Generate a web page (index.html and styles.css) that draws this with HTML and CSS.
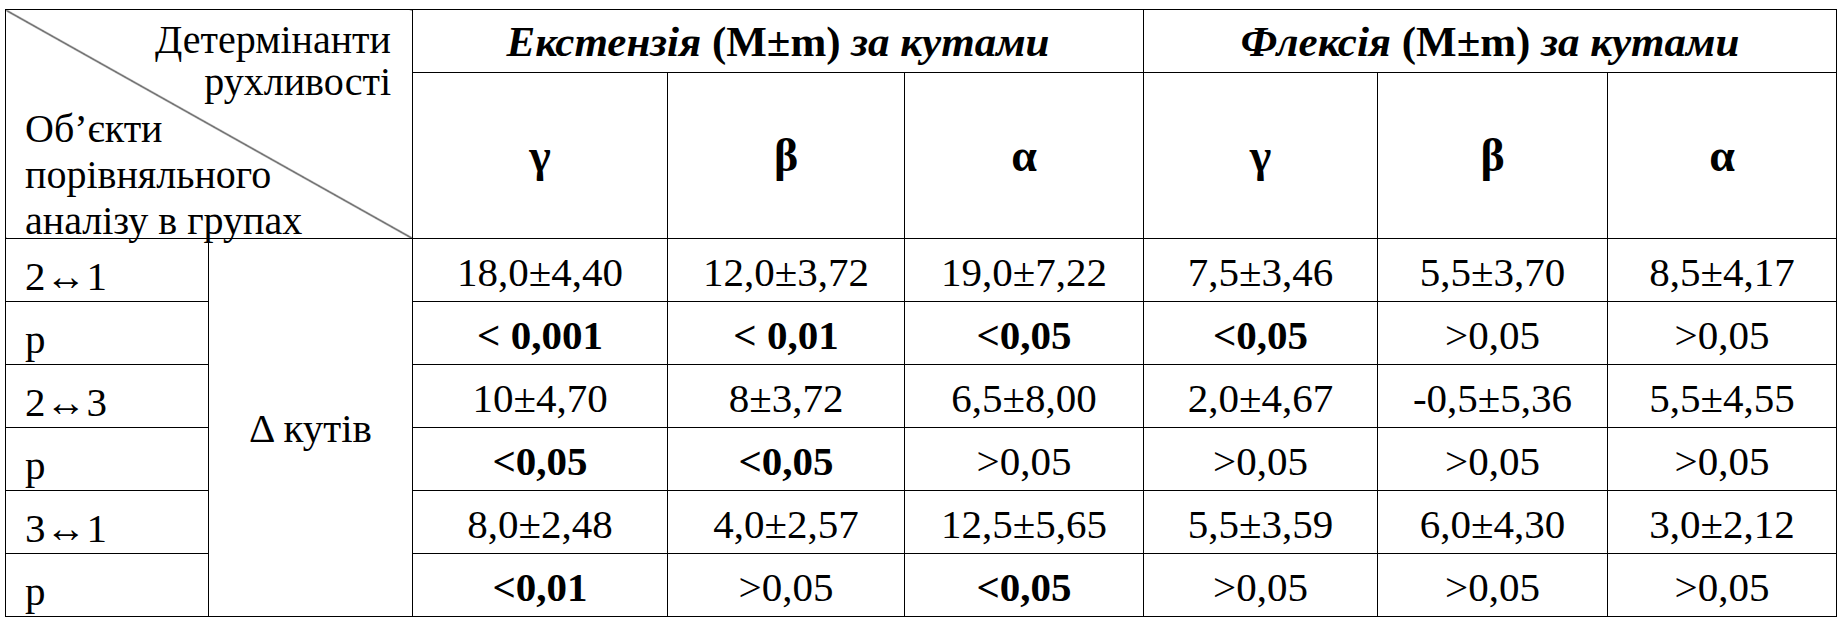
FILE: index.html
```html
<!DOCTYPE html>
<html lang="uk">
<head>
<meta charset="utf-8">
<title>Детермінанти рухливості</title>
<link rel="stylesheet" href="styles.css">
</head>
<body>
<div class="page">
<table class="grid">
  <colgroup>
    <col class="c-obj"><col class="c-det">
    <col class="c-v1"><col class="c-v2"><col class="c-v3">
    <col class="c-v4"><col class="c-v5"><col class="c-v6">
  </colgroup>
  <thead>
    <tr class="r-group">
      <th class="corner" rowspan="2" colspan="2">
        <div class="corner-box">
          <div class="corner-top">Детермінанти<br>рухливості</div>
          <div class="corner-bottom">Об’єкти<br>порівняльного<br>аналізу в групах</div>
        </div>
      </th>
      <th class="group" colspan="3"><span class="it">Екстензія</span> (M±m) <span class="it">за кутами</span></th>
      <th class="group" colspan="3"><span class="it">Флексія</span> (M±m) <span class="it">за кутами</span></th>
    </tr>
    <tr class="r-greek">
      <th class="greek">γ</th><th class="greek">β</th><th class="greek">α</th>
      <th class="greek">γ</th><th class="greek">β</th><th class="greek">α</th>
    </tr>
  </thead>
  <tbody>
    <tr class="r-data">
      <td class="label">2↔1</td>
      <td class="delta" rowspan="6">Δ кутів</td>
      <td>18,0±4,40</td><td>12,0±3,72</td><td>19,0±7,22</td>
      <td>7,5±3,46</td><td>5,5±3,70</td><td>8,5±4,17</td>
    </tr>
    <tr class="r-data">
      <td class="label">p</td>
      <td class="b">&lt; 0,001</td><td class="b">&lt; 0,01</td><td class="b">&lt;0,05</td>
      <td class="b">&lt;0,05</td><td>&gt;0,05</td><td>&gt;0,05</td>
    </tr>
    <tr class="r-data">
      <td class="label">2↔3</td>
      <td>10±4,70</td><td>8±3,72</td><td>6,5±8,00</td>
      <td>2,0±4,67</td><td>-0,5±5,36</td><td>5,5±4,55</td>
    </tr>
    <tr class="r-data">
      <td class="label">p</td>
      <td class="b">&lt;0,05</td><td class="b">&lt;0,05</td><td>&gt;0,05</td>
      <td>&gt;0,05</td><td>&gt;0,05</td><td>&gt;0,05</td>
    </tr>
    <tr class="r-data">
      <td class="label">3↔1</td>
      <td>8,0±2,48</td><td>4,0±2,57</td><td>12,5±5,65</td>
      <td>5,5±3,59</td><td>6,0±4,30</td><td>3,0±2,12</td>
    </tr>
    <tr class="r-data">
      <td class="label">p</td>
      <td class="b">&lt;0,01</td><td>&gt;0,05</td><td class="b">&lt;0,05</td>
      <td>&gt;0,05</td><td>&gt;0,05</td><td>&gt;0,05</td>
    </tr>
  </tbody>
</table>
</div>
</body>
</html>
```
FILE: styles.css
```css
html, body {
  margin: 0;
  padding: 0;
  background: #ffffff;
  font-family: "Liberation Serif", "Times New Roman", serif;
}

.page {
  padding: 9px 0 0 5px;
  color: #000000;
}

.grid, .grid * {
  font-family: "Liberation Serif", "Times New Roman", serif;
}

.grid {
  border-collapse: collapse;
  table-layout: fixed;
  width: 1831px;
  font-size: 41px;
}

.c-obj { width: 203px; }
.c-det { width: 204px; }
.c-v1 { width: 255px; }
.c-v2 { width: 237px; }
.c-v3 { width: 239px; }
.c-v4 { width: 234px; }
.c-v5 { width: 230px; }
.c-v6 { width: 229px; }

.grid th,
.grid td {
  border: 1.5px solid #000000;
  padding: 0;
  text-align: center;
  vertical-align: middle;
  white-space: nowrap;
}

.r-group { height: 63px; }
.r-greek { height: 166px; }
.r-data { height: 63px; }

.corner {
  font-weight: normal;
  font-size: 40px;
  vertical-align: top;
  background: linear-gradient(to top right,
    transparent calc(50% - 1px),
    #000000 50%,
    transparent calc(50% + 1px));
}

.corner-box {
  height: 228px;
  display: flex;
  flex-direction: column;
  justify-content: space-between;
}

.corner-top {
  text-align: right;
  line-height: 42px;
  padding: 9px 21px 0 0;
}

.corner-bottom {
  text-align: left;
  line-height: 46px;
  padding-left: 19px;
  margin-bottom: -6px;
}

.group {
  font-size: 43px;
  font-weight: bold;
}

.it { font-style: italic; }

.greek {
  font-weight: bold;
  font-size: 46px;
}

.grid td {
  padding-top: 4px;
}

.grid td.label {
  text-align: left;
  vertical-align: bottom;
  padding: 0 0 1px 19px;
  line-height: 47px;
}

.grid td.delta {
  padding-top: 0;
}

.b { font-weight: bold; }
```
